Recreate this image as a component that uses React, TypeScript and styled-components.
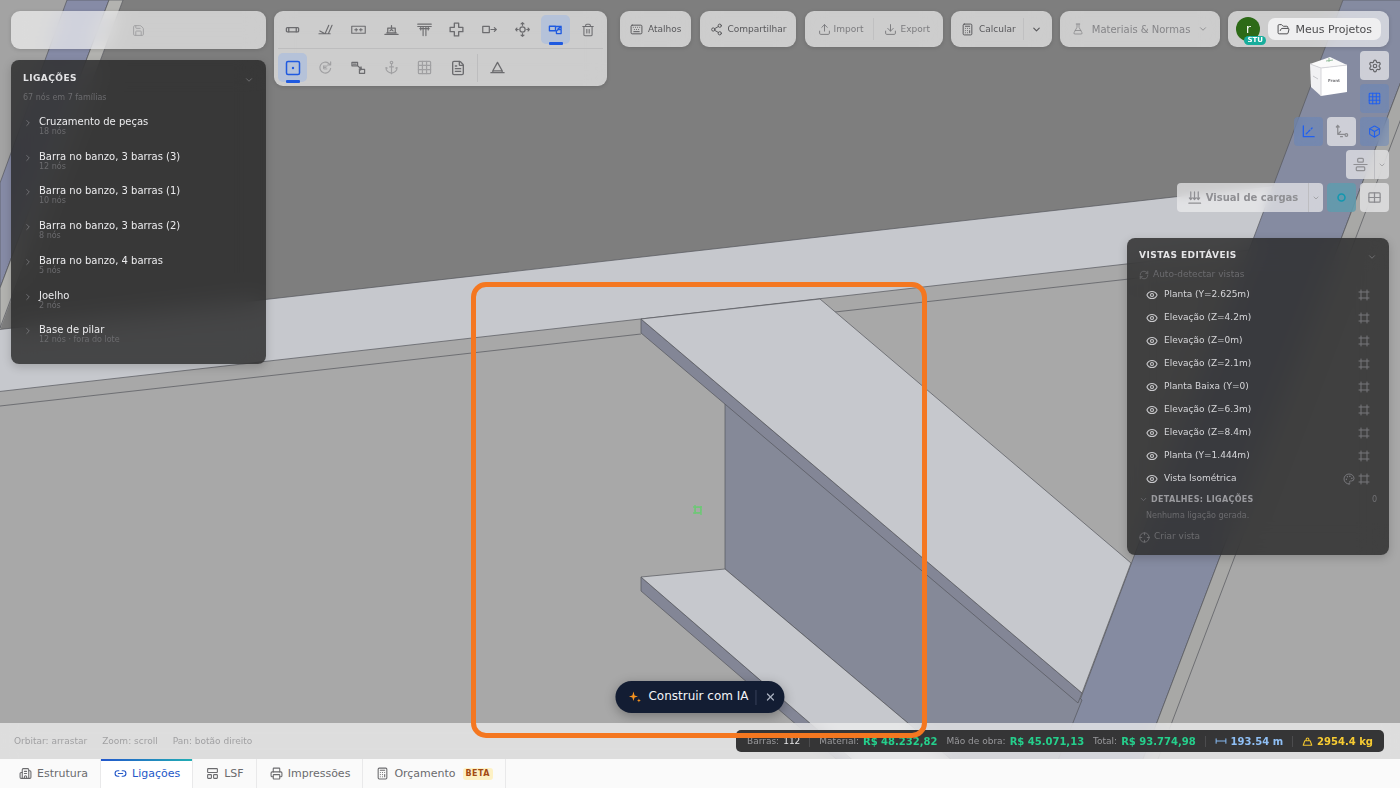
import React from 'react';
import styled, { createGlobalStyle, css } from 'styled-components';
import {
  Anchor, Box, Building2, Calculator, ChevronDown, ChevronRight, Download, Eye, FileText,
  FlaskConical, FolderOpen, Frame, Keyboard, LayoutPanelTop, Link2, Palette, Printer,
  RefreshCw, Save, Settings, Share2, Trash2, Upload, X,
} from 'lucide-react';

const GlobalStyle = createGlobalStyle`
  *, *::before, *::after { box-sizing: border-box; }
  body { margin: 0; font-family: "DejaVu Sans", Verdana, sans-serif; font-size: 9px; color: #4c4c4e; background: #a8a8a8; }
  button { font: inherit; color: inherit; border: 0; background: none; padding: 0; margin: 0; }
  h2, h3, p, ul { margin: 0; padding: 0; list-style: none; }
  a { color: inherit; text-decoration: none; }
  svg { flex: none; display: block; }
`;

/* ---------- page frame ---------- */

const Page = styled.div`
  position: relative;
  display: flex;
  flex-direction: column;
  min-height: 100vh;
  overflow: hidden;
`;

const SceneSvg = styled.svg`
  position: absolute;
  inset: 0;
  width: 100%;
  height: 100%;
`;

const Workspace = styled.main`
  position: relative;
  flex: 1;
  display: flex;
  align-items: flex-start;
  gap: 8px;
  padding: 11px;
`;

const SideColumn = styled.div`
  flex: none;
  width: 255px;
  display: flex;
  flex-direction: column;
  gap: 11px;
`;

const RightArea = styled.div`
  flex: 1;
  display: flex;
  flex-direction: column;
  align-items: flex-end;
  gap: 4px;
  margin-left: 5px;
`;

const glass = css`
  background: rgba(255, 255, 255, 0.61);
  backdrop-filter: blur(10px);
  box-shadow: 0 1px 4px rgba(0, 0, 0, 0.14);
`;

const darkGlass = css`
  background: rgba(39, 39, 40, 0.81);
  backdrop-filter: blur(14px);
  border-radius: 8px;
  box-shadow: 0 3px 10px rgba(0, 0, 0, 0.18);
`;

/* ---------- top bar ---------- */

const ProjectBar = styled.button`
  ${glass}
  height: 38px;
  border-radius: 9px;
  display: flex;
  align-items: center;
  justify-content: center;
  color: #a1a1a3;
`;

const Toolbar = styled.div`
  ${glass}
  flex: none;
  width: 333px;
  border-radius: 9px;
  padding: 4px;
`;

const ToolRow = styled.div<{ $ruled?: boolean }>`
  display: flex;
  align-items: center;
  gap: ${p => (p.$ruled ? '0' : '4px')};
  justify-content: ${p => (p.$ruled ? 'space-between' : 'flex-start')};
  padding-bottom: ${p => (p.$ruled ? '4px' : '0')};
  margin-bottom: ${p => (p.$ruled ? '4px' : '0')};
  border-bottom: ${p => (p.$ruled ? '1px solid #bdbdbe' : '0')};
`;

const ToolButton = styled.button<{ $active?: boolean; $muted?: boolean }>`
  width: 29px;
  height: 29px;
  flex: none;
  display: flex;
  flex-direction: column;
  align-items: center;
  justify-content: center;
  border-radius: 5px;
  color: ${p => (p.$active ? '#1f5ae0' : p.$muted ? '#a0a0a2' : '#6c6c6f')};
  background: ${p => (p.$active ? '#b5c2d9' : 'transparent')};
  position: relative;

  &::after {
    content: '';
    display: ${p => (p.$active ? 'block' : 'none')};
    position: absolute;
    bottom: -1px;
    width: 14px;
    height: 3px;
    border-radius: 1px;
    background: #1f5ae0;
  }
`;

const RowDivider = styled.span`
  width: 1px;
  height: 28px;
  margin: 0 1px;
  background: #bdbdbe;
`;

const Actions = styled.div`
  width: 100%;
  display: flex;
  justify-content: space-between;
  gap: 7px;
`;

const ActionGroup = styled.div<{ $pad?: number }>`
  ${glass}
  height: 36px;
  border-radius: 9px;
  display: flex;
  align-items: center;
  padding: 0 ${p => p.$pad ?? 10}px;
`;

const ActionButton = styled.button<{ $tone?: string; $size?: number; $gap?: number }>`
  display: flex;
  align-items: center;
  gap: ${p => p.$gap ?? 5}px;
  color: ${p => p.$tone ?? '#58585b'};
  font-size: ${p => p.$size ?? 9}px;
  white-space: nowrap;
`;

const Separator = styled.span<{ $gap: number }>`
  width: 1px;
  height: 22px;
  margin: 0 ${p => p.$gap}px;
  background: #c0c0c1;
`;

const Avatar = styled.button`
  position: relative;
  width: 24px;
  height: 24px;
  margin-right: 8px;
  border-radius: 50%;
  background: #2d6a17;
  color: #fff;
  font-size: 12px;
`;

const AvatarBadge = styled.span`
  position: absolute;
  left: 8px;
  bottom: -4px;
  padding: 0 3px;
  border-radius: 5px;
  background: #17ad9c;
  font-size: 7px;
  line-height: 9px;
  font-weight: 700;
`;

const ProjectsLink = styled.a`
  display: flex;
  align-items: center;
  gap: 5px;
  height: 22px;
  padding: 0 9px;
  border-radius: 7px;
  background: #efeff0;
  font-size: 11px;
  white-space: nowrap;
`;

/* ---------- view tools ---------- */

const ViewTools = styled.div`
  position: relative;
  display: flex;
  flex-direction: column;
  align-items: flex-end;
  gap: 4px;
`;

const ViewRow = styled.div`
  display: flex;
  gap: 4px;
`;

type Tone = 'plain' | 'blue' | 'teal';
const toneBack: Record<Tone, string> = {
  plain: 'rgba(236, 236, 238, 0.7)',
  blue: 'rgba(98, 132, 192, 0.46)',
  teal: 'rgba(90, 158, 176, 0.74)',
};
const toneInk: Record<Tone, string> = { plain: '#8b8b8f', blue: '#2160ee', teal: '#1398b0' };

const ViewButton = styled.button<{ $tone?: Tone; $ink?: string }>`
  width: 29px;
  height: 29px;
  border-radius: 4px;
  display: flex;
  align-items: center;
  justify-content: center;
  color: ${p => p.$ink ?? toneInk[p.$tone ?? 'plain']};
  background: ${p => toneBack[p.$tone ?? 'plain']};
  backdrop-filter: blur(4px);
`;

const SplitControl = styled.div`
  display: flex;
  height: 29px;
  border-radius: 4px;
  overflow: hidden;
  color: #8f8f93;
  background: rgba(236, 236, 238, 0.7);
  backdrop-filter: blur(4px);
`;

const SplitMain = styled.button<{ $wide?: boolean }>`
  display: flex;
  align-items: center;
  justify-content: center;
  gap: 4px;
  width: ${p => (p.$wide ? '131px' : '28px')};
  font-size: 10px;
  font-weight: 700;
`;

const SplitArrow = styled.button`
  width: 15px;
  display: flex;
  align-items: center;
  justify-content: center;
  border-left: 1px solid #bdbdc1;
`;

const ViewCube = styled.svg`
  position: absolute;
  right: 40px;
  top: 5px;
`;

/* ---------- dark panels ---------- */

const FamilyPanel = styled.section`
  ${darkGlass}
  padding: 12px;
`;

const ViewsPanel = styled.section`
  ${darkGlass}
  width: 262px;
  margin-top: 22px;
  padding: 11px 12px;
  color: #727276;
`;

const PanelHeader = styled.header`
  display: flex;
  align-items: center;
  justify-content: space-between;
  height: 12px;
  color: #77777a;

  svg {
    margin-top: 3px;
  }
`;

const PanelTitle = styled.h2`
  font-size: 9px;
  letter-spacing: 0.05em;
  color: #e4e4e6;
`;

const Hint = styled.p`
  margin: 9px 0 6px;
  font-size: 8px;
  line-height: 10px;
  color: #6b6b6e;
`;

const FamilyList = styled.ul`
  display: flex;
  flex-direction: column;
  height: 243px;
`;

const FamilyItem = styled.li`
  flex: 1;
`;

const FamilyRow = styled.button`
  display: flex;
  align-items: flex-start;
  gap: 6px;
  width: 100%;
  height: 100%;
  padding-top: 7px;
  text-align: left;
  color: #7a7a7d;

  svg {
    margin-top: 2px;
  }
`;

const FamilyText = styled.span`
  display: flex;
  flex-direction: column;
`;

const FamilyName = styled.span`
  font-size: 10px;
  line-height: 11px;
  color: #ececee;
`;

const FamilyCount = styled.span`
  font-size: 8px;
  line-height: 9px;
  color: #6b6b6e;
`;

const PanelAction = styled.button`
  display: flex;
  align-items: center;
  gap: 4px;
  height: 16px;
  margin-top: 5px;
  font-size: 9px;
  color: #6b6b6e;

  svg {
    margin-top: 2px;
  }
`;

const ViewList = styled.ul`
  display: flex;
  flex-direction: column;
  height: 206px;
  margin-top: 1px;
  padding: 0 7px;
`;

const ViewItem = styled.li`
  flex: 1;
  display: flex;
  align-items: center;
  gap: 6px;

  svg {
    margin-top: 2px;
  }
`;

const EyeButton = styled.button`
  color: #c8c8cb;
`;

const ViewName = styled.span`
  flex: 1;
  font-size: 9px;
  color: #d6d6d9;
`;

const IconButton = styled.button`
  margin-left: -3px;
  color: #77777b;
`;

const DetailsHeader = styled.button`
  display: flex;
  align-items: center;
  width: 100%;
  gap: 3px;
  height: 20px;
  font-size: 8px;
`;

const DetailsTitle = styled.span`
  flex: 1;
  text-align: left;
  font-weight: 700;
  letter-spacing: 0.04em;
  color: #9b9b9f;
`;

const EmptyNote = styled.p`
  font-size: 8px;
  line-height: 14px;
  padding-left: 7px;
  color: #6b6b6e;
`;

/* ---------- canvas overlays ---------- */

const HighlightFrame = styled.div`
  position: absolute;
  left: 50%;
  bottom: 50px;
  width: 456px;
  height: 456px;
  margin-left: -229px;
  border: 5px solid #f47720;
  border-radius: 15px;
  pointer-events: none;
`;

const AiPill = styled.div`
  position: absolute;
  left: 50%;
  bottom: 10px;
  transform: translateX(-50%);
  display: flex;
  align-items: center;
  height: 32px;
  padding: 0 8px 0 13px;
  border-radius: 16px;
  background: #131d33;
  color: #f3f4f7;
  box-shadow: 0 3px 12px rgba(0, 0, 0, 0.3);
`;

const AiButton = styled.button`
  display: flex;
  align-items: center;
  gap: 7px;
  font-size: 12px;
  line-height: 14px;
  padding-bottom: 2px;
  white-space: nowrap;
`;

const AiClose = styled.button`
  display: flex;
  margin-left: 7px;
  padding-left: 8px;
  height: 15px;
  align-items: center;
  border-left: 1px solid #39425a;
  color: #a9b0bf;
`;

/* ---------- bottom bars ---------- */

const StatusBar = styled.footer`
  position: relative;
  display: flex;
  align-items: center;
  justify-content: space-between;
  height: 36px;
  padding: 0 16px 0 14px;
  background: rgba(240, 240, 240, 0.74);
  backdrop-filter: blur(8px);
`;

const Hints = styled.div`
  display: flex;
  gap: 15px;
  color: #a0a0a2;
`;

const Stats = styled.div`
  display: flex;
  align-items: center;
  gap: 9px;
  height: 22px;
  padding: 0 11px;
  border-radius: 5px;
  background: #353536;
  color: #98989b;
  white-space: nowrap;
`;

const StatDivider = styled.span`
  width: 1px;
  height: 11px;
  background: #4c4c4e;
`;

const Stat = styled.span`
  display: flex;
  align-items: center;
  gap: 4px;
`;

const StatValue = styled.strong<{ $color: string; $plain?: boolean }>`
  font-size: ${p => (p.$plain ? 9 : 10)}px;
  font-weight: ${p => (p.$plain ? 400 : 700)};
  color: ${p => p.$color};
`;

const Tabs = styled.nav`
  position: relative;
  display: flex;
  height: 29px;
  padding-left: 6px;
  background: #fafafa;
`;

const Tab = styled.a<{ $active?: boolean }>`
  position: relative;
  display: flex;
  align-items: center;
  gap: 5px;
  padding: 0 12px 0 13px;
  border-right: 1px solid #e9e9ea;
  font-size: 11px;
  color: ${p => (p.$active ? '#2458c8' : '#6b6b6e')};
  background: ${p => (p.$active ? '#ffffff' : 'transparent')};

  &::before {
    content: '';
    display: ${p => (p.$active ? 'block' : 'none')};
    position: absolute;
    inset: 0 0 auto;
    height: 2px;
    background: linear-gradient(90deg, #2257cc, #22aeb4);
  }
`;

const BetaTag = styled.span`
  margin-left: 2px;
  padding: 0 3px;
  border-radius: 3px;
  background: #fdf1c4;
  color: #a34a12;
  font-size: 8px;
  line-height: 12px;
  font-weight: 700;
  letter-spacing: 0.05em;
`;

/* ---------- drawings ---------- */

const Glyph = ({ children, size = 15, width = 1.2 }: { children: React.ReactNode; size?: number; width?: number }) => (
  <svg width={size} height={size} viewBox="0 0 16 16" fill="none" stroke="currentColor" strokeWidth={width} strokeLinecap="round" strokeLinejoin="round" aria-hidden="true">
    {children}
  </svg>
);

const BarIcon = () => <Glyph width={1.4}><rect x="1.500" y="6" width="13" height="4.500" rx="1" /><path d="M4 6v4.500M12 6v4.500" /></Glyph>;
const BracingIcon = () => <Glyph><path d="M1 12.500h12M7.500 12.500 11.500 3.500M11 12.500 15 3.500M2 9.500l4.500 2.500" /></Glyph>;
const PlateIcon = () => <Glyph><rect x=".8" y="4.500" width="14.400" height="7.500" /><path d="M4 8.300h3M5.500 7v2.600M9 8.300h3M10.500 7v2.600" strokeWidth="1.200" /></Glyph>;
const BaseIcon = () => <Glyph width={1.3}><path d="M1 13.300h14M3 11.500h10M4 11.500V6.500h8v5M8 3.800v2.700M6.300 9.500 8 8l1.700 1.500" /></Glyph>;
const SlabIcon = () => <Glyph><path d="M.8 2.300h14.400M.8 4.800h14.400M6.500 5v9.500M9.500 5v9.500M4 5v3.500M12 5v3.500M3 7h10" /></Glyph>;
const CrossIcon = () => <Glyph width={1.4}><path d="M5.700 1.200h4.600v4.500h4.500v4.600h-4.500v4.500H5.700v-4.500H1.200V5.700h4.500z" /></Glyph>;
const ExtendIcon = () => <Glyph width={1.3}><rect x=".8" y="4.700" width="7" height="6.600" /><path d="M9.500 8h5.800M13.200 6l2 2-2 2" /></Glyph>;
const MoveIcon = () => <Glyph width={1.3}><circle cx="8" cy="8" r="2.800" /><path d="M8 3.500V.8M6.500 2 8 .8 9.500 2M8 12.500v2.700M6.500 14 8 15.200 9.500 14M3.500 8H.8M2 6.500.8 8 2 9.500M12.500 8h2.700M14 6.500 15.200 8 14 9.500" /></Glyph>;
const JointIcon = () => <Glyph width={1.4}><path d="M1.500 4.500H8v4.800H1.500zM8 4.800h6M10.500 7.500 14 4.800M14 4.800v2.500M9 12.300V9.500l2-1.500h3v4.300z" /></Glyph>;
const NodeIcon = () => <Glyph size={16} width={1.5}><rect x="1.500" y="1.500" width="13" height="13" rx="1.500" /><circle cx="8" cy="8" r="1.200" fill="currentColor" stroke="none" /></Glyph>;
const CycleIcon = () => <Glyph><path d="M13.500 9A5.800 5.800 0 1 1 11.500 3.700L13.500 5.300M13.500 2v3.300h-3.300" /><path d="M6 6.500h3.500M6 6.500v3h3.500M6 8h2.500" strokeWidth="1" /></Glyph>;
const TransferIcon = () => <Glyph width={1.3}><path d="M1 2.500h6v3.700H1zM2.500 4.400h3M7 6.200l4 3.300M8.800 9.800l2.200-.3-.3-2.200M9 14.200v-3l2-1.200h3.500v4.200z" /></Glyph>;
const SupportIcon = () => <Glyph width={1.4}><path d="M8 2.500 13 11.500H3zM1 13.500h14M3 13.500v-2h10v2" /></Glyph>;
const AxesIcon = () => <Glyph width={1.4}><path d="M2.500 2v11.500h11.500M5.500 10.500l1.500-1.500M8 8l1.500-1.500M11 5l.8-.8" /></Glyph>;
const AxesLocalIcon = () => <Glyph width={1.3}><path d="M4 1.500v9.500h8M2.500 3.200 4 1.500l1.500 1.700M4 11l3-3M7 13.500h2M13.200 10.300a1.400 1.400 0 1 1 0 2.800 1.400 1.400 0 0 1 0-2.800" /></Glyph>;
const AlignIcon = () => <Glyph width={1.3}><rect x="5" y="1.500" width="6" height="4" rx="1" /><path d="M1 8h14" /><rect x="3.500" y="10.500" width="9" height="4" rx="1" /></Glyph>;
const LoadsIcon = () => <Glyph width={1.3}><path d="M2 14h12.500M4 2v8M8 2v8M12 2v8M2.500 8.500 4 10.200 5.500 8.500M6.500 8.500 8 10.200 9.500 8.500M10.500 8.500 12 10.200 13.500 8.500" /></Glyph>;
const RingIcon = () => <Glyph width={1.7}><circle cx="8" cy="8" r="3.700" /></Glyph>;
const PanesIcon = () => <Glyph width={1.3}><rect x="2" y="3" width="12" height="10" rx="1" /><path d="M8 3v10M2 8h12" /></Glyph>;
const CreateIcon = () => <Glyph size={11} width={1.4}><circle cx="8" cy="8" r="6.800" /><path d="M8 1.200V4M8 12v2.800M1.200 8H4M12 8h2.800" /></Glyph>;
const SpanIcon = () => <Glyph size={12} width={1.4}><path d="M1.500 5v6M14.500 5v6M1.500 8h13" /></Glyph>;
const WeightIcon = () => <Glyph size={11} width={1.6}><path d="M4 7h8L14.200 13.500H1.800zM6 7V5a2 2 0 1 1 4 0v2" /></Glyph>;
const SparkIcon = () => (
  <svg width="13" height="13" viewBox="0 0 13 13" fill="#f7931e" aria-hidden="true">
    <path d="M5 1.500 6.100 5.400 9.500 6.500 6.100 7.600 5 11 3.900 7.600.5 6.500 3.900 5.400z" />
    <path d="M10.500 8.500 11 10l1.500.6-1.500.5-.5 1.400-.6-1.400-1.400-.5L9.900 10z" />
  </svg>
);

const PaneGrid = ({ size = 15 }: { size?: number }) => (
  <Glyph size={size} width={1.3}>
    <rect x="1.500" y="1.500" width="13" height="13" rx="1" />
    <path d="M5.800 1.500v13M10.200 1.500v13M1.500 5.800h13M1.500 10.200h13" />
  </Glyph>
);

const Scene = () => (
  <SceneSvg viewBox="0 0 1400 788" preserveAspectRatio="xMidYMid slice" aria-hidden="true">
    <rect width="1400" height="788" fill="#a8a8a8" />
    <path d="M123 0H1343L1262 218 0 330z" fill="#7e7e7e" />
    <path d="M0 0H67L0 183z" fill="#a3a3a3" />
    <g stroke="#55565c" strokeWidth=".7">
      <path d="M67 0H109L0 288V183z" fill="#868ba6" />
      <path d="M109 0H123L0 328V288z" fill="#b3b3b0" />
      <path d="M-5 330 1280 185 1250 250-5 392z" fill="#c6c8cd" />
      <path d="M0 406 641 334M835 312 1245 266" fill="none" />
      <path d="M1343 0H1432L1132 788H1047z" fill="#858ba1" />
      <path d="M1432 0H1446L1147 788H1132z" fill="#a8a8a6" />
      <path d="M725 400V569L985 788H1047L1082 700z" fill="#858998" />
      <path d="M641 319 1082 693 1078 703 641 333z" fill="#838696" />
      <path d="M641 319 820 299 1131 563 1082 693z" fill="#c6c8cd" />
      <path d="M641 577V591L870 788H885z" fill="#838696" />
      <path d="M641 577 725 569 985 788H885z" fill="#c6c8cd" />
    </g>
    <path d="M693 507h9M693 513h8M695 505v9M701 506v9" stroke="#6fc777" strokeWidth="1.500" fill="none" />
    <circle cx="698" cy="510" r="3" stroke="#6fc777" fill="none" />
  </SceneSvg>
);

const Cube = () => (
  <ViewCube width="40" height="42" viewBox="0 0 40 42" aria-hidden="true">
    <path d="M1 8 12 12V40L2 31z" fill="#f1f1f3" />
    <path d="M12 12 38 9V36L12 40z" fill="#ffffff" />
    <path d="M1 8 21 1 38 9 12 12z" fill="#fafafa" />
    <path d="M1 8 12 12 38 9M12 12V40" stroke="#d5d5d9" fill="none" />
    <path d="M17 5l7-1M20 2v4" stroke="#94bd9c" fill="none" />
    <text x="19" y="26" fontSize="4" fontWeight="700" fill="#77777b">Front</text>
    <path d="M4 20l5 3" stroke="#c6c6ca" fill="none" />
  </ViewCube>
);

/* ---------- data ---------- */

const families = [
  ['Cruzamento de peças', '18 nós'],
  ['Barra no banzo, 3 barras (3)', '12 nós'],
  ['Barra no banzo, 3 barras (1)', '10 nós'],
  ['Barra no banzo, 3 barras (2)', '8 nós'],
  ['Barra no banzo, 4 barras', '5 nós'],
  ['Joelho', '2 nós'],
  ['Base de pilar', '12 nós · fora do lote'],
];

const views = [
  'Planta (Y=2.625m)', 'Elevação (Z=4.2m)', 'Elevação (Z=0m)', 'Elevação (Z=2.1m)', 'Planta Baixa (Y=0)',
  'Elevação (Z=6.3m)', 'Elevação (Z=8.4m)', 'Planta (Y=1.444m)', 'Vista Isométrica',
];

export default function App() {
  return (
    <>
      <GlobalStyle />
      <Page>
        <Scene />
        <Workspace>
          <SideColumn>
            <ProjectBar aria-label="Salvar"><Save size={13} strokeWidth={1.8} /></ProjectBar>
            <FamilyPanel>
              <PanelHeader><PanelTitle>LIGAÇÕES</PanelTitle><ChevronDown size={10} /></PanelHeader>
              <Hint>67 nós em 7 famílias</Hint>
              <FamilyList>
                {families.map(([name, count]) => (
                  <FamilyItem key={name}>
                    <FamilyRow>
                      <ChevronRight size={10} />
                      <FamilyText><FamilyName>{name}</FamilyName><FamilyCount>{count}</FamilyCount></FamilyText>
                    </FamilyRow>
                  </FamilyItem>
                ))}
              </FamilyList>
            </FamilyPanel>
          </SideColumn>

          <Toolbar>
            <ToolRow $ruled>
              <ToolButton aria-label="Barra"><BarIcon /></ToolButton>
              <ToolButton aria-label="Contraventamento"><BracingIcon /></ToolButton>
              <ToolButton aria-label="Chapa"><PlateIcon /></ToolButton>
              <ToolButton aria-label="Base"><BaseIcon /></ToolButton>
              <ToolButton aria-label="Laje"><SlabIcon /></ToolButton>
              <ToolButton aria-label="Cruz"><CrossIcon /></ToolButton>
              <ToolButton aria-label="Estender"><ExtendIcon /></ToolButton>
              <ToolButton aria-label="Mover"><MoveIcon /></ToolButton>
              <ToolButton aria-label="Ligação" $active><JointIcon /></ToolButton>
              <ToolButton aria-label="Excluir"><Trash2 size={14} strokeWidth={1.8} /></ToolButton>
            </ToolRow>
            <ToolRow>
              <ToolButton aria-label="Nó" $active><NodeIcon /></ToolButton>
              <ToolButton aria-label="Regenerar" $muted><CycleIcon /></ToolButton>
              <ToolButton aria-label="Transferir"><TransferIcon /></ToolButton>
              <ToolButton aria-label="Ancoragem" $muted><Anchor size={15} strokeWidth={1.8} /></ToolButton>
              <ToolButton aria-label="Malha" $muted><PaneGrid /></ToolButton>
              <ToolButton aria-label="Relatório"><FileText size={16} strokeWidth={2} /></ToolButton>
              <RowDivider />
              <ToolButton aria-label="Apoio"><SupportIcon /></ToolButton>
            </ToolRow>
          </Toolbar>

          <RightArea>
            <Actions>
              <ActionGroup><ActionButton><Keyboard size={13} strokeWidth={1.8} />Atalhos</ActionButton></ActionGroup>
              <ActionGroup><ActionButton><Share2 size={13} strokeWidth={1.8} />Compartilhar</ActionButton></ActionGroup>
              <ActionGroup $pad={13}>
                <ActionButton $tone="#7c7c7f" $gap={3}><Upload size={13} strokeWidth={1.8} />Import</ActionButton>
                <Separator $gap={10} />
                <ActionButton $tone="#7c7c7f" $gap={3}><Download size={13} strokeWidth={1.8} />Export</ActionButton>
              </ActionGroup>
              <ActionGroup $pad={10}>
                <ActionButton><Calculator size={13} strokeWidth={1.8} />Calcular</ActionButton>
                <Separator $gap={7} />
                <ActionButton aria-label="Opções de cálculo"><ChevronDown size={11} strokeWidth={2.5} /></ActionButton>
              </ActionGroup>
              <ActionGroup $pad={12}>
                <ActionButton $tone="#858588" $size={10} $gap={8}>
                  <FlaskConical size={12} strokeWidth={1.5} />Materiais &amp; Normas<ChevronDown size={10} />
                </ActionButton>
              </ActionGroup>
              <ActionGroup $pad={8}>
                <Avatar aria-label="Conta">r<AvatarBadge>STU</AvatarBadge></Avatar>
                <ProjectsLink href="#projetos"><FolderOpen size={13} strokeWidth={1.8} />Meus Projetos</ProjectsLink>
              </ActionGroup>
            </Actions>

            <ViewTools>
              <Cube />
              <ViewRow><ViewButton aria-label="Configurações" $ink="#646468"><Settings size={14} strokeWidth={2} /></ViewButton></ViewRow>
              <ViewRow><ViewButton aria-label="Grade" $tone="blue"><PaneGrid size={13} /></ViewButton></ViewRow>
              <ViewRow>
                <ViewButton aria-label="Eixos" $tone="blue"><AxesIcon /></ViewButton>
                <ViewButton aria-label="Eixos locais"><AxesLocalIcon /></ViewButton>
                <ViewButton aria-label="Sólido" $tone="blue"><Box size={13} /></ViewButton>
              </ViewRow>
              <ViewRow>
                <SplitControl>
                  <SplitMain aria-label="Alinhar"><AlignIcon /></SplitMain>
                  <SplitArrow aria-label="Mais alinhamentos"><ChevronDown size={8} /></SplitArrow>
                </SplitControl>
              </ViewRow>
              <ViewRow>
                <SplitControl>
                  <SplitMain $wide><LoadsIcon />Visual de cargas</SplitMain>
                  <SplitArrow aria-label="Mais cargas"><ChevronDown size={8} /></SplitArrow>
                </SplitControl>
                <ViewButton aria-label="Nós" $tone="teal"><RingIcon /></ViewButton>
                <ViewButton aria-label="Janelas"><PanesIcon /></ViewButton>
              </ViewRow>
            </ViewTools>

            <ViewsPanel>
              <PanelHeader><PanelTitle>VISTAS EDITÁVEIS</PanelTitle><ChevronDown size={10} /></PanelHeader>
              <PanelAction><RefreshCw size={10} />Auto-detectar vistas</PanelAction>
              <ViewList>
                {views.map(name => (
                  <ViewItem key={name}>
                    <EyeButton aria-label={`Mostrar ${name}`}><Eye size={12} strokeWidth={2.2} /></EyeButton>
                    <ViewName>{name}</ViewName>
                    {name === 'Vista Isométrica' && <IconButton aria-label="Cores"><Palette size={12} /></IconButton>}
                    <IconButton aria-label={`Enquadrar ${name}`}><Frame size={12} /></IconButton>
                  </ViewItem>
                ))}
              </ViewList>
              <DetailsHeader><ChevronDown size={9} /><DetailsTitle>DETALHES: LIGAÇÕES</DetailsTitle>0</DetailsHeader>
              <EmptyNote>Nenhuma ligação gerada.</EmptyNote>
              <PanelAction><CreateIcon />Criar vista</PanelAction>
            </ViewsPanel>
          </RightArea>

          <AiPill>
            <AiButton><SparkIcon />Construir com IA</AiButton>
            <AiClose aria-label="Fechar"><X size={12} strokeWidth={2.4} /></AiClose>
          </AiPill>
        </Workspace>

        <StatusBar>
          <Hints><span>Orbitar: arrastar</span><span>Zoom: scroll</span><span>Pan: botão direito</span></Hints>
          <Stats>
            <Stat>Barras: <StatValue $color="#e6e6e8" $plain>112</StatValue></Stat>
            <StatDivider />
            <Stat>Material: <StatValue $color="#25cf8c">R$ 48.232,82</StatValue></Stat>
            <Stat>Mão de obra: <StatValue $color="#25cf8c">R$ 45.071,13</StatValue></Stat>
            <Stat>Total: <StatValue $color="#25cf8c">R$ 93.774,98</StatValue></Stat>
            <StatDivider />
            <Stat><StatValue as="span" $color="#86b7ee"><SpanIcon /></StatValue><StatValue $color="#8fbff5">193.54 m</StatValue></Stat>
            <StatDivider />
            <Stat><StatValue as="span" $color="#f2c52e"><WeightIcon /></StatValue><StatValue $color="#f7cb32">2954.4 kg</StatValue></Stat>
          </Stats>
        </StatusBar>

        <Tabs>
          <Tab href="#estrutura"><Building2 size={13} />Estrutura</Tab>
          <Tab href="#ligacoes" $active><Link2 size={13} />Ligações</Tab>
          <Tab href="#lsf"><LayoutPanelTop size={13} />LSF</Tab>
          <Tab href="#impressoes"><Printer size={13} />Impressões</Tab>
          <Tab href="#orcamento"><Calculator size={13} />Orçamento<BetaTag>BETA</BetaTag></Tab>
        </Tabs>
        <HighlightFrame />
      </Page>
    </>
  );
}
